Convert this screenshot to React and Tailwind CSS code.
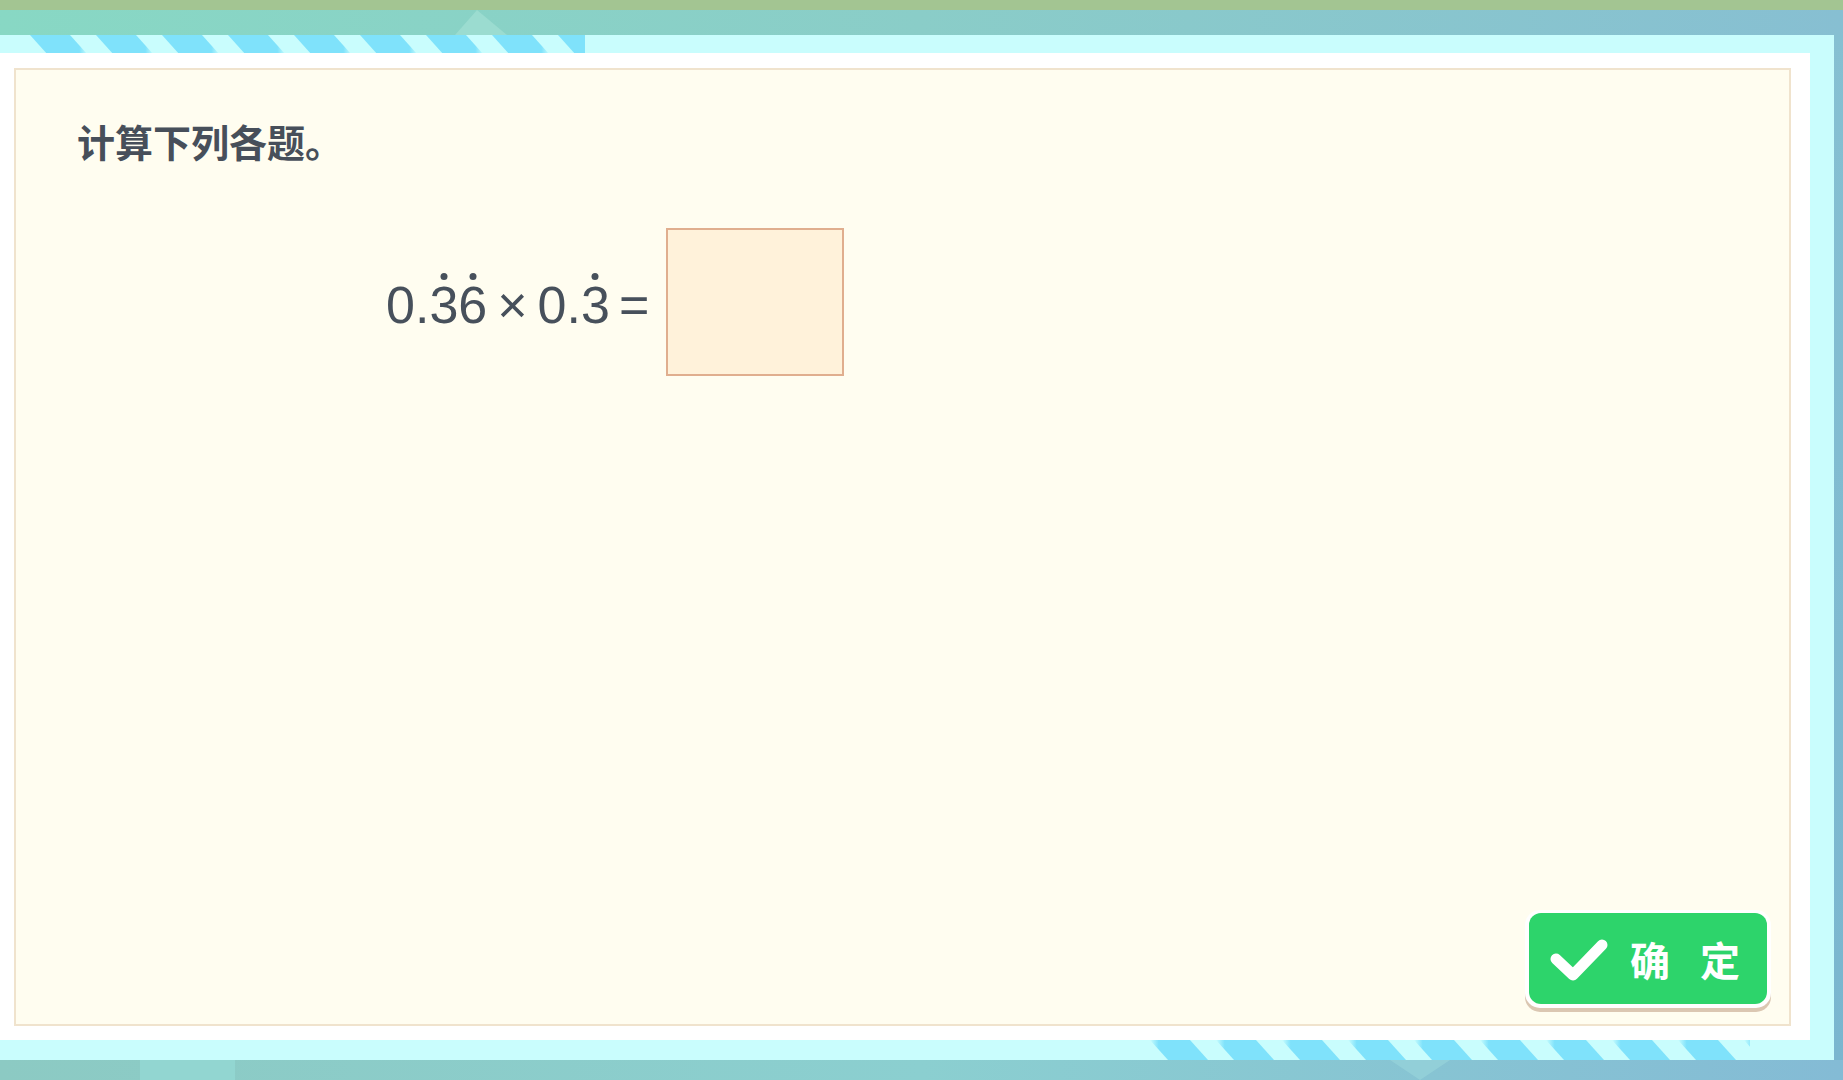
import React from 'react';

// 循环小数：数字上方加点
const DotDigit = ({ children }) => (
  <span className="relative inline-block">
    {children}
    <span className="absolute left-1/2 top-[-6px] h-[7px] w-[7px] -translate-x-1/2 rounded-full bg-[#47505b]" />
  </span>
);

const Stripes = ({ width, flip = false, offset = 0 }) => {
  const items = [];
  for (let i = 0; i < 12; i++) items.push(offset + i * 66);
  return (
    <svg width={width} height="20" viewBox={`0 0 ${width} 20`} className="block">
      <defs>
        <linearGradient id={flip ? 'fadeL' : 'fadeR'} x1="0" x2="1" y1="0" y2="0">
          <stop offset="0" stopColor="#7fe2fb" stopOpacity={flip ? 0 : 1} />
          <stop offset="0.15" stopColor="#7fe2fb" stopOpacity="1" />
          <stop offset="0.85" stopColor="#7fe2fb" stopOpacity="1" />
          <stop offset="1" stopColor="#7fe2fb" stopOpacity={flip ? 1 : 0} />
        </linearGradient>
      </defs>
      {items.map((x) => (
        <polygon
          key={x}
          points={`${x},0 ${x + 40},0 ${x + 58},20 ${x + 18},20`}
          fill={`url(#${flip ? 'fadeL' : 'fadeR'})`}
        />
      ))}
    </svg>
  );
};

export default function App() {
  return (
    <div className="flex h-[1080px] w-[1843px] flex-col overflow-hidden bg-[#88cfc9] font-['Liberation_Sans','Noto_Sans_CJK_SC',sans-serif]">
      {/* 顶部色带 */}
      <div className="h-[10px] bg-[#a3c592]" />
      <div className="relative h-[25px] bg-gradient-to-r from-[#88d8c4] via-[#8acdc8] to-[#87bfd2]">
        <div className="absolute left-[455px] top-0 h-0 w-0 border-b-[25px] border-l-[22px] border-r-[30px] border-b-[#9bdcd0] border-l-transparent border-r-transparent" />
      </div>

      <div className="flex flex-1">
        <div className="flex flex-1 flex-col">
          {/* 上方条纹 */}
          <div className="h-[18px] overflow-hidden bg-[#c9fdfd]">
            <Stripes width={585} offset={30} />
          </div>

          {/* 白色边框 */}
          <div className="flex flex-1 bg-white pb-[14px] pl-[14px] pr-[19px] pt-[15px]">
            <div className="flex flex-1 flex-col border-2 border-[#f0e3cd] bg-[#fffdf0] pb-[16px] pl-[61px] pr-[18px] pt-[52px]">
              <h1 className="font-['Noto_Sans_CJK_SC',sans-serif] text-[38px] font-bold leading-[38px] text-[#474f5a]">
                计算下列各题。
              </h1>

              {/* 算式 */}
              <div className="ml-[309px] mt-[68px] flex items-center text-[52px] leading-none text-[#47505b]">
                <span className="mt-[6px] flex items-center">
                  <span>0.</span>
                  <DotDigit>3</DotDigit>
                  <DotDigit>6</DotDigit>
                  <span className="mx-[10px]">×</span>
                  <span>0.</span>
                  <DotDigit>3</DotDigit>
                  <span className="ml-[9px]">=</span>
                </span>
                <div className="ml-[17px] h-[148px] w-[178px] border-2 border-[#e0ae8e] bg-[#fff2da]" />
              </div>

              {/* 确定按钮 */}
              <div className="mt-auto self-end rounded-[15px] bg-white p-[4px] pt-[3px] shadow-[0_4px_0_#dbc7b2]">
                <button className="flex h-[91px] w-[238px] items-center rounded-[12px] bg-[#2dd46b] pl-[20px]">
                  <svg width="60" height="44" viewBox="0 0 60 44">
                    <path d="M7 22 L24 38 L53 8" fill="none" stroke="white" strokeWidth="11" strokeLinecap="round" strokeLinejoin="round" />
                  </svg>
                  <span className="ml-[21px] flex gap-[30px] font-['Noto_Sans_CJK_SC',sans-serif] text-[40px] font-bold leading-none text-white">
                    <span>确</span>
                    <span>定</span>
                  </span>
                </button>
              </div>
            </div>
          </div>

          {/* 下方条纹 */}
          <div className="flex h-[20px] justify-end overflow-hidden bg-[#c9fdfd] pr-[60px]">
            <Stripes width={600} flip />
          </div>
        </div>

        {/* 右侧边框 */}
        <div className="w-[24px] bg-[#c9fdfd]" />
        <div className="w-[9px] bg-gradient-to-b from-[#86c0d2] to-[#7ab6cf]" />
      </div>

      {/* 底部色带 */}
      <div className="relative h-[20px] bg-gradient-to-r from-[#8ccac3] via-[#8bcfd0] to-[#84bbd5]">
        <div className="absolute left-[140px] top-0 h-[20px] w-[95px] bg-[#92d6d1]" />
        <div className="absolute left-[1390px] top-0 h-0 w-0 border-t-[20px] border-l-[30px] border-r-[30px] border-t-[#92cfd8] border-l-transparent border-r-transparent" />
      </div>
    </div>
  );
}
